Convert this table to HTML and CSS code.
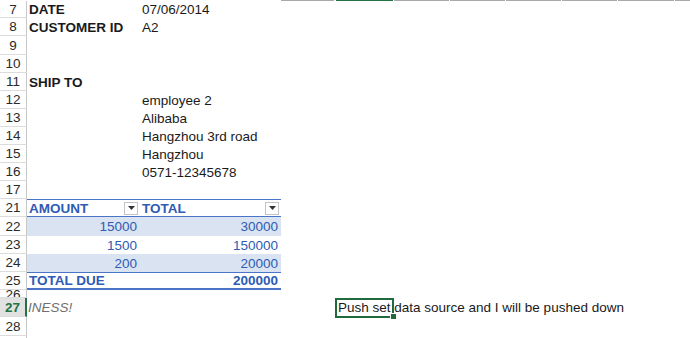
FILE: index.html
```html
<!DOCTYPE html>
<html>
<head>
<meta charset="utf-8">
<link rel="stylesheet" href="styles.css">
</head>
<body>
<div class="sheet">
  <div class="colhead">
    <span class="seg w53"></span><span class="gap2"></span>
    <span class="seg sel w57"></span><span class="gap1"></span>
    <span class="seg w55"></span><span class="gap1"></span>
    <span class="seg w55"></span><span class="gap1"></span>
    <span class="seg w55"></span><span class="gap1"></span>
    <span class="seg w55"></span><span class="gap1"></span>
    <span class="seg w56"></span><span class="gap1"></span>
    <span class="seg grow"></span>
  </div>

  <div class="row h17"><div class="rh">7</div><div class="c b">DATE</div><div class="c">07/06/2014</div></div>
  <div class="row"><div class="rh">8</div><div class="c b">CUSTOMER ID</div><div class="c">A2</div></div>
  <div class="row h19"><div class="rh">9</div><div class="c"></div><div class="c"></div></div>
  <div class="row"><div class="rh">10</div><div class="c"></div><div class="c"></div></div>
  <div class="row"><div class="rh">11</div><div class="c b">SHIP TO</div><div class="c"></div></div>
  <div class="row"><div class="rh">12</div><div class="c"></div><div class="c">employee 2</div></div>
  <div class="row"><div class="rh">13</div><div class="c"></div><div class="c">Alibaba</div></div>
  <div class="row"><div class="rh">14</div><div class="c"></div><div class="c">Hangzhou 3rd road</div></div>
  <div class="row"><div class="rh">15</div><div class="c"></div><div class="c">Hangzhou</div></div>
  <div class="row"><div class="rh">16</div><div class="c"></div><div class="c">0571-12345678</div></div>
  <div class="row"><div class="rh">17</div><div class="c"></div><div class="c"></div></div>

  <div class="row"><div class="rh">21</div>
    <div class="c t th">AMOUNT<span class="dd"><svg width="7" height="4" viewBox="0 0 7 4"><path d="M0 0H7L3.5 4Z" fill="#333"/></svg></span></div>
    <div class="c t th">TOTAL<span class="dd"><svg width="7" height="4" viewBox="0 0 7 4"><path d="M0 0H7L3.5 4Z" fill="#333"/></svg></span></div>
  </div>
  <div class="row h19"><div class="rh">22</div><div class="c t num band">15000</div><div class="c t num band">30000</div></div>
  <div class="row"><div class="rh">23</div><div class="c t num">1500</div><div class="c t num">150000</div></div>
  <div class="row"><div class="rh">24</div><div class="c t num band">200</div><div class="c t num band">20000</div></div>
  <div class="row"><div class="rh">25</div><div class="c t tot">TOTAL DUE</div><div class="c t tot num">200000</div></div>
  <div class="row h8"><div class="rh short">26</div></div>
  <div class="row h19"><div class="rh active">27</div>
    <div class="c note">INESS!</div><div class="c"></div><div class="c"></div>
    <div class="c selcell"><span class="overflow">Push set data source and I will be pushed down</span><span class="selbox"></span><span class="handle"></span></div>
  </div>
  <div class="row h19"><div class="rh">28</div></div>
  <div class="row"><div class="rh"></div></div>
</div>
</body>
</html>
```
FILE: styles.css
```css
* { box-sizing: border-box; }
html, body { margin: 0; padding: 0; background: #fff; }
body {
  font-family: "Liberation Sans", Arial, Helvetica, sans-serif;
  font-size: 13.5px;
  color: #1a1a1a;
  width: 690px;
  height: 338px;
  overflow: hidden;
}
.sheet { display: flex; flex-direction: column; }

.colhead { display: flex; height: 1px; padding-left: 281px; }
.seg { height: 1px; background: #a9a9a9; }
.seg.sel { background: #217346; }
.gap1 { width: 1px; }
.gap2 { width: 2px; }
.w53 { width: 53px; }
.w55 { width: 55px; }
.w56 { width: 56px; }
.w57 { width: 57px; }
.grow { flex: 1; }

.row {
  display: grid;
  grid-template-columns: 27px 113px 141px 54px 59px 1fr;
  height: 18px;
}
.row.h17 { height: 17px; }
.row.h19 { height: 19px; }
.row.h8 { height: 8px; }

.rh {
  border-right: 1px solid #c8c8c8;
  border-bottom: 1px solid #dcdcdc;
  text-align: center;
  color: #2a2a2a;
  font-size: 13.5px;
  display: flex;
  align-items: center;
  justify-content: center;
  overflow: hidden;
}
.rh.short { align-items: flex-start; line-height: 10px; }
.rh.active {
  background: #e1e1e1;
  color: #217346;
  font-weight: bold;
  border-right: 2px solid #217346;
}

.c {
  display: flex;
  align-items: center;
  padding: 0 3px 0 2px;
  white-space: nowrap;
  min-width: 0;
}
.b { font-weight: bold; }

.t { color: #2e5bb5; }
.th {
  font-weight: bold;
  border-top: 1px solid #4a74c8;
  border-bottom: 1px solid #4a74c8;
  justify-content: space-between;
  padding-right: 2px;
}
.dd {
  width: 14px;
  height: 13px;
  border: 1px solid #c4c4c4;
  background: #fff;
  display: flex;
  align-items: center;
  justify-content: center;
}
.num { justify-content: flex-end; }
.band { background: #dae3f2; }
.tot {
  font-weight: bold;
  border-top: 1px solid #4a74c8;
  border-bottom: 2px solid #4a74c8;
}

.note {
  font-style: italic;
  color: #707070;
  padding-left: 1px;
}
.selcell {
  position: relative;
  overflow: visible;
  padding-left: 3px;
}
.overflow { position: relative; z-index: 1; }
.selbox {
  position: absolute;
  left: 0;
  top: 0;
  right: 0;
  bottom: -1px;
  border: 2px solid #1f6b3d;
}
.handle {
  position: absolute;
  right: -3px;
  bottom: -3px;
  width: 5px;
  height: 5px;
  background: #1f6b3d;
  border: 1px solid #fff;
  box-sizing: content-box;
  z-index: 2;
}
```
